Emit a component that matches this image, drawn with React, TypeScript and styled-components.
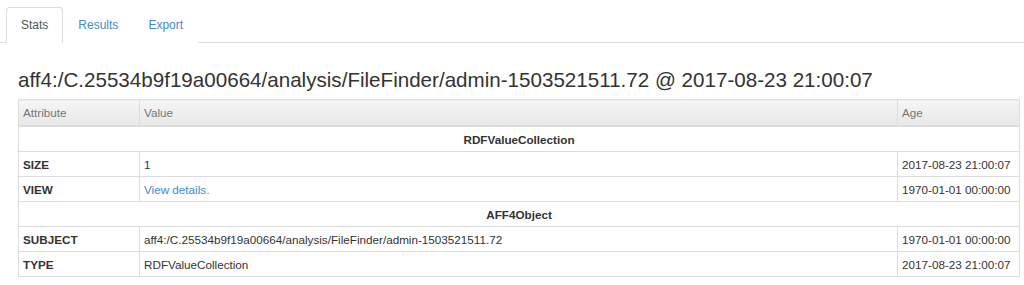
import React from 'react';
import styled, { createGlobalStyle } from 'styled-components';

const GlobalStyle = createGlobalStyle`
    body {
        margin: 0;
        background: #fff;
        font-family: "Liberation Sans", Arial, sans-serif;
        color: #333;
    }
`;

const Page = styled.div`
    padding-top: 7px;
`;

const TabBar = styled.ul`
    display: flex;
    list-style: none;
    margin: 0;
    padding: 0 6px;
    border-bottom: 1px solid #ddd;
`;

const Tab = styled.li<{ $active?: boolean }>`
    margin-bottom: -1px;
    padding: 10px 14px 9px;
    font-size: 12px;
    line-height: 15px;
    border: 1px solid ${(p) => (p.$active ? '#ddd' : 'transparent')};
    border-bottom-color: ${(p) => (p.$active ? '#fff' : 'transparent')};
    border-radius: 4px 4px 0 0;
    background: #fff;
    color: ${(p) => (p.$active ? '#555' : '#428bca')};
    cursor: pointer;
`;

const Content = styled.div`
    padding: 0 4px 0 18px;
`;

const Title = styled.h1`
    margin: 25px 0 7px;
    font-size: 20.6px;
    font-weight: normal;
    line-height: 24px;
    color: #333;
`;

const Table = styled.table`
    width: 100%;
    border-collapse: collapse;
    font-size: 11.7px;
    border: 1px solid #ddd;
`;

const HeadCell = styled.th<{ $width?: string }>`
    width: ${(p) => p.$width || 'auto'};
    height: 25px;
    padding: 0 4px;
    text-align: left;
    font-weight: normal;
    color: #777;
    background: linear-gradient(to bottom, #f5f5f5 0%, #e8e8e8 100%);
    border: 1px solid #ddd;
    border-bottom-width: 2px;
`;

const Row = styled.tr``;

const GroupCell = styled.td`
    height: 24px;
    padding: 0 4px;
    text-align: center;
    font-weight: bold;
    border: 1px solid #ddd;
`;

const Cell = styled.td<{ $bold?: boolean }>`
    height: 24px;
    padding: 0 4px;
    font-weight: ${(p) => (p.$bold ? 'bold' : 'normal')};
    border: 1px solid #ddd;
    white-space: nowrap;
`;

const Link = styled.a`
    color: #428bca;
    text-decoration: none;
`;

type Attr = { name: string; value: React.ReactNode; age: string };

const groups: { title: string; rows: Attr[] }[] = [
    {
        title: 'RDFValueCollection',
        rows: [
            { name: 'SIZE', value: '1', age: '2017-08-23 21:00:07' },
            { name: 'VIEW', value: <Link href="#">View details.</Link>, age: '1970-01-01 00:00:00' },
        ],
    },
    {
        title: 'AFF4Object',
        rows: [
            {
                name: 'SUBJECT',
                value: 'aff4:/C.25534b9f19a00664/analysis/FileFinder/admin-1503521511.72',
                age: '1970-01-01 00:00:00',
            },
            { name: 'TYPE', value: 'RDFValueCollection', age: '2017-08-23 21:00:07' },
        ],
    },
];

const App = () => {
    return (
        <Page>
            <GlobalStyle />
            <TabBar>
                <Tab $active>Stats</Tab>
                <Tab>Results</Tab>
                <Tab>Export</Tab>
            </TabBar>
            <Content>
                <Title>aff4:/C.25534b9f19a00664/analysis/FileFinder/admin-1503521511.72 @ 2017-08-23 21:00:07</Title>
                <Table>
                    <thead>
                        <tr>
                            <HeadCell $width="112px">Attribute</HeadCell>
                            <HeadCell>Value</HeadCell>
                            <HeadCell $width="113px">Age</HeadCell>
                        </tr>
                    </thead>
                    <tbody>
                        {groups.map((g) => (
                            <React.Fragment key={g.title}>
                                <Row>
                                    <GroupCell colSpan={3}>{g.title}</GroupCell>
                                </Row>
                                {g.rows.map((r) => (
                                    <Row key={r.name}>
                                        <Cell $bold>{r.name}</Cell>
                                        <Cell>{r.value}</Cell>
                                        <Cell>{r.age}</Cell>
                                    </Row>
                                ))}
                            </React.Fragment>
                        ))}
                    </tbody>
                </Table>
            </Content>
        </Page>
    );
};

export default App;
